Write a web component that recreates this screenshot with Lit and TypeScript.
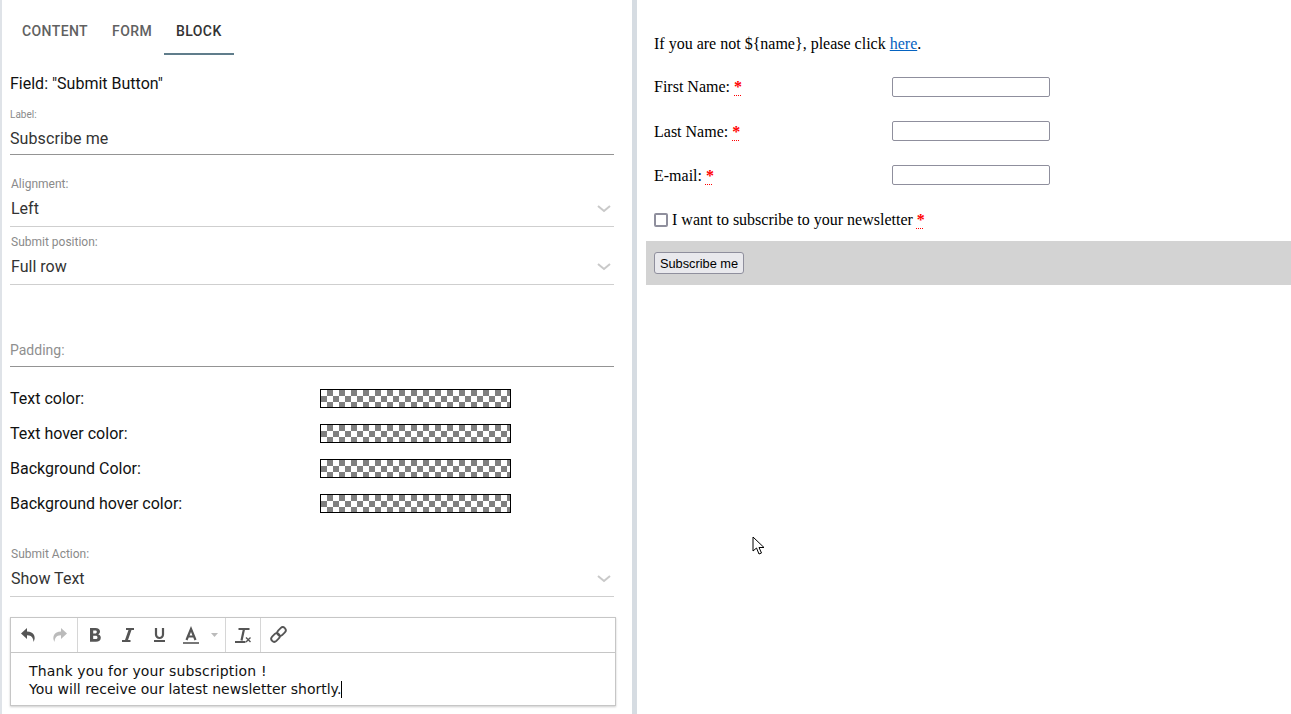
import { LitElement, html, css, svg } from "lit";
import { customElement } from "lit/decorators.js";

const chevron = html`<svg class="chev" width="14" height="8" viewBox="0 0 14 8"><path d="M1 1l6 5 6-5" fill="none" stroke="#c9c9c9" stroke-width="2"/></svg>`;
const undoPath = svg`<path d="M6 2L0 7.500l6 5.500V9.200c3 0 5 .8 6 3.800.4 1.200.4 2 .3 3 1.700-2 1.700-5 .7-7-1.200-2.300-3.500-3.500-7-3.500z"/>`;

@customElement("app-root")
export class AppRoot extends LitElement {
  static styles = css`
    :host { display: block; width: 1291px; height: 714px; overflow: hidden; background: #fff; position: relative; font-family: Roboto, sans-serif; color: #212121; }
    .page { display: flex; height: 714px; }
    .left { width: 632px; box-sizing: border-box; border-left: 2px solid #dfe3e8; padding-left: 8px; flex: none; }
    .divider { width: 5px; background: #d6dce2; flex: none; }
    .right { flex: 1; font-family: "Liberation Serif", serif; font-size: 16px; color: #000; }
    .pad { padding-left: 17px; }

    .tabs { display: flex; height: 55px; width: 604px; }
    .tab { padding: 0 12px; height: 55px; box-sizing: border-box; font-size: 14px; font-weight: 500; letter-spacing: 0.4px; color: #616161; line-height: 63px; }
    .tab.active { color: #333; border-bottom: 2px solid #607d8b; }
    .title { font-size: 16px; line-height: 20px; margin-top: 19px; color: #111; }
    .field { width: 604px; }
    .small { font-size: 10px; line-height: 12px; color: #8a8a8a; }
    .lab { margin-top: 15px; }
    .value { font-size: 16px; line-height: 22px; margin-top: 7px; padding-bottom: 4px; border-bottom: 1px solid #949494; color: #333; letter-spacing: 0.1px; }
    .sel .small { font-size: 12px; line-height: 14px; padding-left: 1px; }
    .sel .value { padding: 0 0 6px 1px; margin-top: 6px; line-height: 23px; border-bottom-color: #cfcfcf; display: flex; justify-content: space-between; align-items: center; letter-spacing: 0; }
    .chev { margin-right: 3px; }
    .a1 { margin-top: 22px; }
    .a2 { margin-top: 8px; }
    .a3 { height: 82px; box-sizing: border-box; padding-top: 56px; font-size: 14px; line-height: 18px; color: #8f8f8f; border-bottom: 1px solid #949494; }
    .colors { margin-top: 22px; display: flex; flex-direction: column; gap: 16px; }
    .crow { display: flex; align-items: center; height: 19px; font-size: 16px; color: #111; }
    .crow label { width: 310px; flex: none; }
    .swatch { width: 191px; height: 19px; box-sizing: border-box; border: 1px solid #000;
      background: repeating-conic-gradient(#808080 0 25%, #fff 0 50%) 0 0 / 12px 12px; }
    .a4 { margin-top: 34px; }
    .editor { width: 606px; height: 89px; margin-top: 20px; box-sizing: border-box; border: 1px solid #c6c6c6; box-shadow: 0 1px 2px rgba(0,0,0,.2); }
    .toolbar { display: flex; height: 35px; border-bottom: 1px solid #c6c6c6; box-sizing: border-box; }
    .group { display: flex; align-items: center; border-right: 1px solid #d6d6d6; height: 100%; }
    .group svg { display: block; overflow: visible; fill: #555; }
    .g1 { width: 66px; }
    .g2 { width: 147px; }
    .g3 { width: 34px; }
    .g4 { border-right: 0; }
    .undo { margin-left: 10px; }
    .redo { margin-left: 18px; fill: #bbb !important; }
    .bold { margin-left: 12px; }
    .ital { margin-left: 21px; }
    .under { margin-left: 20px; }
    .color { margin-left: 18px; }
    .drop { margin-left: 12px; fill: #bbb !important; }
    .clear { margin-left: 9px; }
    .link { margin-left: 9px; }
    .content { font-family: "DejaVu Sans", sans-serif; font-size: 14px; line-height: 18px; padding: 9px 18px; color: #111; white-space: nowrap; }
    .wide { letter-spacing: 0.15px; }
    .caret { display: inline-block; width: 1px; height: 17px; background: #000; vertical-align: -4px; }

    .line1 { margin-top: 34px; line-height: 20px; }
    a { color: #0563c1; text-decoration: underline; }
    .frow { display: grid; grid-template-columns: 238px 158px; align-items: center; height: 44px; }
    .low { padding-top: 2px; }
    .rows { margin-top: 11px; }
    .frow input { width: 158px; height: 20px; box-sizing: border-box; border: 1px solid #8f8f9d; border-radius: 2px; margin: 0; padding: 0; background: #fff; display: block; }
    .req { color: #f00; font-weight: 700; text-decoration: underline dotted #f00 1px; text-underline-offset: 3px; }
    .chk { display: flex; align-items: center; height: 44px; box-sizing: border-box; padding-top: 2px; }
    .box { width: 14px; height: 14px; box-sizing: border-box; border: 2px solid #8f8f9d; border-radius: 2px; margin-right: 4px; flex: none; }
    .bar { margin-left: -8px; padding-left: 8px; background: #d3d3d3; height: 44px; display: flex; align-items: center; }
    button { font-family: "Liberation Sans", sans-serif; font-size: 12.8px; height: 22px; width: 90px; padding: 1px 0 0; box-sizing: border-box; border: 1px solid #8f8f9d; border-radius: 3px; background: #e9e9ed; color: #000; }
    .cursor { position: absolute; left: 752px; top: 536px; }
  `;

  render() {
    return html`<div class="page">
      <div class="left">
        <div class="tabs">
          <div class="tab">CONTENT</div>
          <div class="tab">FORM</div>
          <div class="tab active">BLOCK</div>
        </div>
        <div class="title">Field: "Submit Button"</div>
        <div class="field">
          <div class="small lab">Label:</div>
          <div class="value">Subscribe me</div>
        </div>
        <div class="field sel a1"><div class="small">Alignment:</div><div class="value">Left ${chevron}</div></div>
        <div class="field sel a2"><div class="small">Submit position:</div><div class="value">Full row ${chevron}</div></div>
        <div class="field a3">Padding:</div>
        <div class="colors">
          <div class="crow"><label>Text color:</label><div class="swatch"></div></div>
          <div class="crow"><label>Text hover color:</label><div class="swatch"></div></div>
          <div class="crow"><label>Background Color:</label><div class="swatch"></div></div>
          <div class="crow"><label>Background hover color:</label><div class="swatch"></div></div>
        </div>
        <div class="field sel a4"><div class="small">Submit Action:</div><div class="value">Show Text ${chevron}</div></div>
        <div class="editor">
          <div class="toolbar">
            <div class="group g1">
              <svg class="undo" width="14" height="18" viewBox="0 0 14 18">${undoPath}</svg>
              <svg class="redo" width="14" height="18" viewBox="0 0 14 18"><g transform="translate(14 0) scale(-1 1)">${undoPath}</g></svg>
            </div>
            <div class="group g2">
              <svg class="bold" width="11" height="18" viewBox="0 0 11 18"><path fill-rule="evenodd" d="M0 2h5.500c2.800 0 4.500 1.300 4.500 3.400 0 1.400-.8 2.400-2 2.900 1.700.4 2.800 1.700 2.800 3.400 0 2.600-1.900 4.100-4.900 4.100H0zM3.200 4.500v2.900h2c1 0 1.600-.6 1.600-1.500S6.200 4.500 5.200 4.500zM3.200 9.700v3.400h2.500c1.100 0 1.800-.6 1.800-1.700s-.7-1.700-1.800-1.700z"/></svg>
              <svg class="ital" width="12" height="18" viewBox="0 0 12 18"><path d="M4 2h8v2H9.500L6 14h2.500v2H0v-2h3L6.500 4H4z"/></svg>
              <svg class="under" width="11" height="18" viewBox="0 0 11 18"><path d="M2 2v6.500a3.500 3.500 0 0 0 7 0V2" fill="none" stroke="#555" stroke-width="2.200"/><rect x="0" y="14" width="11" height="2"/></svg>
              <svg class="color" width="16" height="18" viewBox="0 0 16 18"><path d="M3.500 14L8 3l4.500 11M5 10.500h6" fill="none" stroke="#555" stroke-width="2.200"/><rect x="0" y="16" width="16" height="2" fill="#777"/></svg>
              <svg class="drop" width="7" height="18" viewBox="0 0 7 18"><path d="M0 7h7l-3.500 4z"/></svg>
            </div>
            <div class="group g3">
              <svg class="clear" width="16" height="18" viewBox="0 0 16 18"><path d="M3.500 3h11M9 3L6.500 14.500" fill="none" stroke="#555" stroke-width="2.200"/><rect x="0" y="15" width="10.500" height="2"/><path d="M11 11.500l4.500 4.500M15.500 11.500L11 16" stroke="#555" stroke-width="1.400"/></svg>
            </div>
            <div class="group g4">
              <svg class="link" width="18" height="18" viewBox="0 0 18 18"><g fill="none" stroke="#555" stroke-width="1.800" transform="rotate(-45 8.500 8.500)"><rect x="-.5" y="5.500" width="9.500" height="6" rx="3"/><rect x="8" y="5.500" width="9.500" height="6" rx="3"/></g></svg>
            </div>
          </div>
          <div class="content"><span class="wide">Thank you for your subscription !</span><br>You will receive our latest newsletter shortly.<span class="caret"></span></div>
        </div>
      </div>
      <div class="divider"></div>
      <div class="right">
        <div class="pad">
          <div class="line1">If you are not \${name}, please click <a>here</a>.</div>
          <div class="rows">
            <div class="frow"><span>First Name: <span class="req">*</span></span><input type="text"></div>
            <div class="frow"><span class="low">Last Name: <span class="req">*</span></span><input type="text"></div>
            <div class="frow"><span class="low">E-mail: <span class="req">*</span></span><input type="text"></div>
            <div class="chk"><span class="box"></span><span>I want to subscribe to your newsletter <span class="req">*</span></span></div>
          </div>
          <div class="bar"><button>Subscribe me</button></div>
        </div>
      </div>
    </div>
    <svg class="cursor" width="14" height="20" viewBox="0 0 14 20"><path d="M1 1v14l3.500-3 2.500 6 2.500-1-2.500-5.500H12z" fill="#fff" stroke="#000" stroke-width="1"/></svg>`;
  }
}
